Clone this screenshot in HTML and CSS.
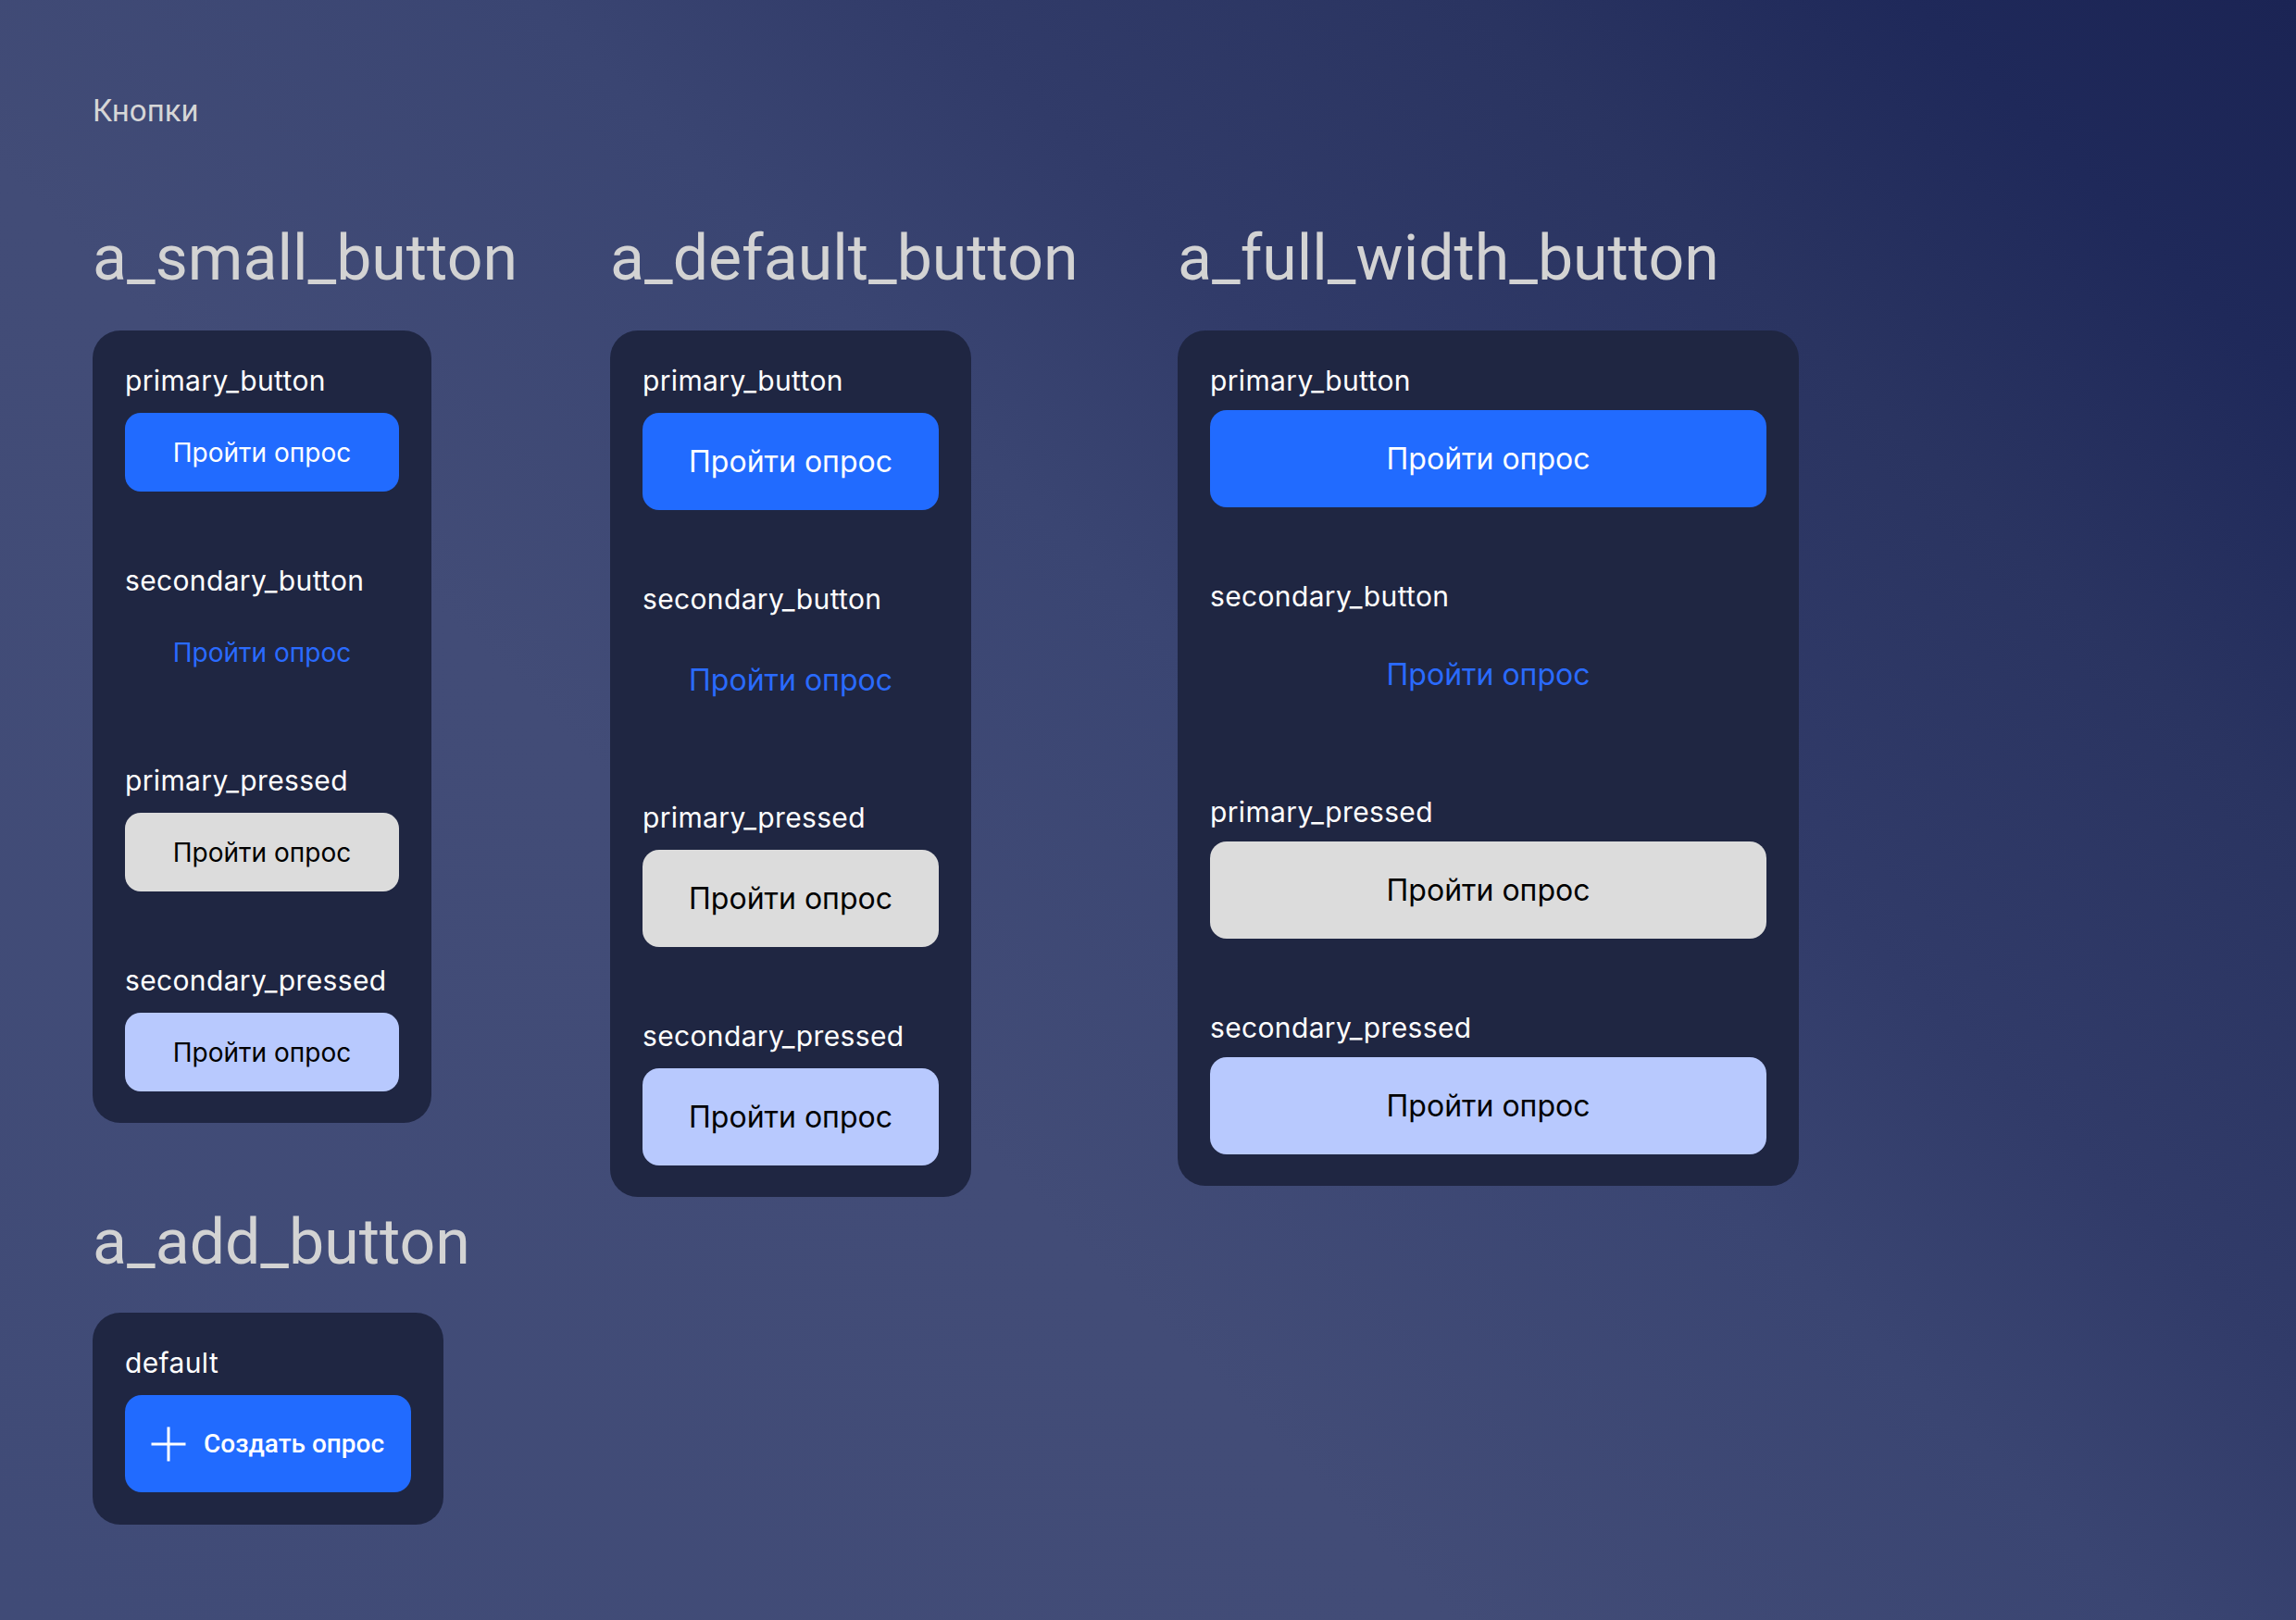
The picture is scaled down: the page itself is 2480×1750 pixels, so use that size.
FILE: index.html
```html
<!DOCTYPE html>
<html lang="ru">
<head>
<meta charset="utf-8">
<title>Кнопки</title>
<link rel="stylesheet" href="styles.css">
</head>
<body>
<main class="page">
  <p class="page-title">Кнопки</p>
  <div class="columns">
    <section class="col">
      <div class="group">
        <h2 class="heading">a_small_button</h2>
        <div class="card card-small">
          <div class="variant"><span class="label">primary_button</span><button class="btn btn-primary">Пройти опрос</button></div>
          <div class="variant"><span class="label">secondary_button</span><button class="btn btn-secondary">Пройти опрос</button></div>
          <div class="variant"><span class="label">primary_pressed</span><button class="btn btn-gray">Пройти опрос</button></div>
          <div class="variant"><span class="label">secondary_pressed</span><button class="btn btn-light">Пройти опрос</button></div>
        </div>
      </div>
      <div class="group group-add">
        <h2 class="heading">a_add_button</h2>
        <div class="card card-add">
          <div class="variant"><span class="label">default</span>
            <button class="btn-add">
              <svg class="plus" width="38" height="38" viewBox="0 0 38 38" aria-hidden="true"><path d="M19 0.5V37.5M0.5 19H37.5" stroke="#fff" stroke-width="3" fill="none"/></svg>
              <span>Создать опрос</span>
            </button>
          </div>
        </div>
      </div>
    </section>
    <section class="col">
      <div class="group">
        <h2 class="heading">a_default_button</h2>
        <div class="card card-default">
          <div class="variant"><span class="label">primary_button</span><button class="btn btn-primary">Пройти опрос</button></div>
          <div class="variant"><span class="label">secondary_button</span><button class="btn btn-secondary">Пройти опрос</button></div>
          <div class="variant"><span class="label">primary_pressed</span><button class="btn btn-gray">Пройти опрос</button></div>
          <div class="variant"><span class="label">secondary_pressed</span><button class="btn btn-light">Пройти опрос</button></div>
        </div>
      </div>
    </section>
    <section class="col">
      <div class="group">
        <h2 class="heading">a_full_width_button</h2>
        <div class="card card-full">
          <div class="variant"><span class="label">primary_button</span><button class="btn btn-primary">Пройти опрос</button></div>
          <div class="variant"><span class="label">secondary_button</span><button class="btn btn-secondary">Пройти опрос</button></div>
          <div class="variant"><span class="label">primary_pressed</span><button class="btn btn-gray">Пройти опрос</button></div>
          <div class="variant"><span class="label">secondary_pressed</span><button class="btn btn-light">Пройти опрос</button></div>
        </div>
      </div>
    </section>
  </div>
</main>
</body>
</html>
```
FILE: styles.css
```css
html, body {
  margin: 0;
  padding: 0;
}
body {
  width: 2480px;
  height: 1750px;
  overflow: hidden;
  background: linear-gradient(45deg, #404b77 0%, #424c77 37%, #3a4572 55%, #313b69 65%, #2a3461 79%, #1f295a 90%, #1b2454 100%);
  font-family: "Inter", "Roboto", sans-serif;
}
.page {
  padding: 100px 0 0 100px;
}
.page-title {
  margin: 0;
  font-family: "Roboto", sans-serif;
  font-size: 33px;
  line-height: 39px;
  color: #d6d6d6;
}
.columns {
  margin-top: 100px;
  display: grid;
  grid-template-columns: 457px 511px auto;
  column-gap: 102px;
  align-items: start;
}
.col {
  display: flex;
  flex-direction: column;
  align-items: flex-start;
}
.group {
  display: flex;
  flex-direction: column;
  align-items: flex-start;
  gap: 38px;
}
.group-add {
  margin-top: 89px;
  gap: 36px;
}
.heading {
  margin: 0;
  font-family: "Roboto", sans-serif;
  font-weight: 400;
  font-size: 68px;
  line-height: 80px;
  color: #d3d3d3;
  white-space: nowrap;
}
.card {
  box-sizing: border-box;
  background: #1f2642;
  border-radius: 30px;
  padding: 37px 35px 34px;
  display: flex;
  flex-direction: column;
  gap: 79px;
}
.card-small { width: 366px; }
.card-default { width: 390px; }
.card-full { width: 671px; }
.card-add { width: 379px; padding-bottom: 35px; }
.variant {
  display: flex;
  flex-direction: column;
  gap: 18px;
}
.card-full .variant { gap: 15px; }
.label {
  font-family: "Inter", sans-serif;
  font-size: 30px;
  line-height: 34px;
  letter-spacing: 0.35px;
  color: #ffffff;
  white-space: nowrap;
}
.btn {
  display: flex;
  align-items: center;
  justify-content: center;
  width: 100%;
  height: 105px;
  border: 0;
  margin: 0;
  padding: 0;
  border-radius: 18px;
  font-family: "Inter", sans-serif;
  font-size: 32px;
  font-weight: 400;
  cursor: pointer;
}
.card-small .btn {
  height: 85px;
  font-size: 28px;
  border-radius: 17px;
}
.btn-primary {
  background: #216bff;
  color: #ffffff;
}
.btn-secondary {
  background: transparent;
  color: #2a6bff;
}
.btn-gray {
  background: #dcdcdc;
  color: #000000;
}
.btn-light {
  background: #b8c9fe;
  color: #000000;
}
.btn-add {
  display: flex;
  align-items: center;
  gap: 19px;
  width: 100%;
  height: 105px;
  border: 0;
  margin: 0;
  padding: 0 28px;
  border-radius: 18px;
  background: #216bff;
  color: #ffffff;
  font-family: "Roboto", sans-serif;
  font-weight: 500;
  font-size: 28px;
  cursor: pointer;
}
.plus {
  flex: none;
  display: block;
}
```
